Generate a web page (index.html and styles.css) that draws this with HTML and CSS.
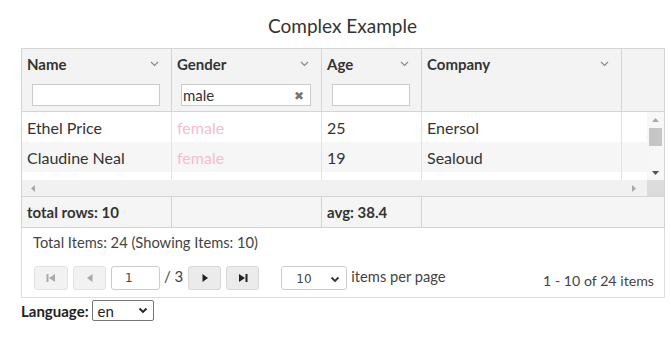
FILE: index.html
```html
<!DOCTYPE html>
<html lang="en">
<head>
  <meta charset="UTF-8">
  <title>Complex Example</title>
  <link rel="stylesheet" href="styles.css">
</head>
<body>
  <h2 class="title">Complex Example</h2>

  <div class="grid">
    <!-- header -->
    <div class="grid-head">
      <div class="hcell w150">
        <div class="hrow"><span>Name</span><svg class="chev" width="9" height="6" viewBox="0 0 9 6"><polyline points="1,1 4.5,4.5 8,1" fill="none" stroke="#888" stroke-width="1.1"/></svg></div>
        <input class="filter" type="text">
      </div>
      <div class="hcell w150">
        <div class="hrow"><span>Gender</span><svg class="chev" width="9" height="6" viewBox="0 0 9 6"><polyline points="1,1 4.5,4.5 8,1" fill="none" stroke="#888" stroke-width="1.1"/></svg></div>
        <div class="filter filled"><span>male</span><span class="clear">&#x2716;</span></div>
      </div>
      <div class="hcell w100">
        <div class="hrow"><span>Age</span><svg class="chev" width="9" height="6" viewBox="0 0 9 6"><polyline points="1,1 4.5,4.5 8,1" fill="none" stroke="#888" stroke-width="1.1"/></svg></div>
        <input class="filter" type="text">
      </div>
      <div class="hcell w200">
        <div class="hrow"><span>Company</span><svg class="chev" width="9" height="6" viewBox="0 0 9 6"><polyline points="1,1 4.5,4.5 8,1" fill="none" stroke="#888" stroke-width="1.1"/></svg></div>
      </div>
      <div class="hcell filler"></div>
    </div>

    <!-- body -->
    <div class="grid-body">
      <div class="viewport">
        <div class="row">
          <div class="cell w150">Ethel Price</div>
          <div class="cell w150 gender">female</div>
          <div class="cell w100">25</div>
          <div class="cell w200">Enersol</div>
        </div>
        <div class="row alt">
          <div class="cell w150">Claudine Neal</div>
          <div class="cell w150 gender">female</div>
          <div class="cell w100">19</div>
          <div class="cell w200">Sealoud</div>
        </div>
        <div class="row">
          <div class="cell w150"></div>
          <div class="cell w150"></div>
          <div class="cell w100"></div>
          <div class="cell w200"></div>
        </div>
      </div>
      <div class="vscroll">
        <svg width="17" height="14" viewBox="0 0 17 14"><polygon points="5,10 12,10 8.5,6" fill="#a8a8a8"/></svg>
        <div class="thumb"></div>
        <div class="vspace"></div>
        <svg width="17" height="14" viewBox="0 0 17 14"><polygon points="5,5 12,5 8.5,9" fill="#505050"/></svg>
      </div>
    </div>
    <div class="hscroll">
      <div class="htrack">
        <svg width="14" height="17" viewBox="0 0 14 17"><polygon points="9,5 9,12 5,8.5" fill="#a8a8a8"/></svg>
        <svg width="14" height="17" viewBox="0 0 14 17"><polygon points="5,5 5,12 9,8.5" fill="#a8a8a8"/></svg>
      </div>
      <div class="corner"></div>
    </div>

    <!-- footer -->
    <div class="grid-foot">
      <div class="fcell w150">total rows: 10</div>
      <div class="fcell w150"></div>
      <div class="fcell w100">avg: 38.4</div>
      <div class="fcell w200"></div>
    </div>
  </div>

  <!-- pager -->
  <div class="pager">
    <div class="summary">Total Items: 24 (Showing Items: 10)</div>
    <div class="pager-bar">
      <div class="nav">
        <button class="pbtn off"><svg width="12" height="12" viewBox="0 0 12 12"><rect x="1.5" y="2" width="2" height="8" fill="#aaa"/><polygon points="10,2 10,10 4,6" fill="#aaa"/></svg></button>
        <button class="pbtn off"><svg width="12" height="12" viewBox="0 0 12 12"><polygon points="8.5,2 8.5,10 3,6" fill="#aaa"/></svg></button>
        <div class="page-input">1</div>
        <span class="of">/ 3</span>
        <button class="pbtn"><svg width="12" height="12" viewBox="0 0 12 12"><polygon points="3.5,2 3.5,10 9,6" fill="#222"/></svg></button>
        <button class="pbtn"><svg width="12" height="12" viewBox="0 0 12 12"><polygon points="2,2 2,10 8,6" fill="#222"/><rect x="8.5" y="2" width="2" height="8" fill="#222"/></svg></button>
      </div>
      <div class="size">
        <div class="size-select"><span>10</span><svg width="10" height="7" viewBox="0 0 10 7"><polyline points="1.5,1.5 5,5 8.5,1.5" fill="none" stroke="#333" stroke-width="1.8"/></svg></div>
        <span class="per">items per page</span>
      </div>
      <div class="range">1 - 10 of 24 items</div>
    </div>
  </div>

  <div class="lang">
    <label>Language:</label>
    <div class="lang-select"><span>en</span><svg width="10" height="7" viewBox="0 0 10 7"><polyline points="1.5,1.5 5,5 8.5,1.5" fill="none" stroke="#222" stroke-width="1.8"/></svg></div>
  </div>
</body>
</html>
```

FILE: styles.css
```css
/* BASE */
* {
  margin: 0;
  padding: 0;
  box-sizing: border-box;
}

body {
  font-family: Lato, "Open Sans", sans-serif;
  font-size: 15px;
  color: #333;
  background: #fff;
  padding: 0 6px 0 21px;
}

.title {
  font-size: 19px;
  font-weight: normal;
  line-height: 24px;
  padding-top: 14px;
  height: 48px;
  text-align: center;
  color: #333;
  padding-right: 1px;
}

/* GRID */
.grid {
  width: 644px;
  border: 1px solid #d4d4d4;
}

.w150 { width: 150px; }
.w100 { width: 100px; }
.w200 { width: 200px; }

.grid-head {
  display: flex;
  height: 63px;
  background: #f3f3f3;
  border-bottom: 1px solid #d4d4d4;
}

.hcell {
  border-right: 1px solid #d4d4d4;
  padding-top: 6px;
}

.hcell.filler {
  flex: 1;
  border-right: none;
}

.hrow {
  display: flex;
  align-items: center;
  justify-content: space-between;
  height: 18px;
  padding: 0 12px 0 5px;
  font-weight: bold;
}

.filter {
  display: block;
  width: calc(100% - 21px);
  height: 22px;
  margin: 11px 0 0 10px;
  border: 1px solid #ccc;
  background: #fff;
  font-family: inherit;
  font-size: 15px;
}

.filter.filled {
  display: flex;
  align-items: center;
  justify-content: space-between;
  padding: 0 6px 0 1px;
  margin-left: 9px;
  width: calc(100% - 19px);
}

.clear {
  font-size: 12px;
  color: #777;
}

.grid-body {
  display: flex;
  height: 68px;
}

.viewport {
  width: 625px;
  overflow: hidden;
}

.row {
  display: flex;
  height: 30px;
  background: #fff;
}

.row.alt {
  background: #f6f6f6;
}

.cell {
  height: 30px;
  line-height: 31px;
  padding: 0 5px;
  font-size: 16px;
  border-right: 1px solid #e2e2e2;
  white-space: nowrap;
}

.cell.gender {
  color: #f8bccb;
}

.vscroll {
  width: 17px;
  background: #f7f7f7;
  display: flex;
  flex-direction: column;
  align-items: center;
}

.vscroll svg {
  display: block;
}

.thumb {
  width: 13px;
  height: 18px;
  background: #c6c6c6;
  margin-top: 2px;
}

.vspace {
  flex: 1;
}

.hscroll {
  display: flex;
  height: 17px;
  border-bottom: 1px solid #d4d4d4;
}

.htrack {
  flex: 1;
  background: #f1f1f1;
  display: flex;
  justify-content: space-between;
  padding: 0 6px 0 4px;
}

.corner {
  width: 17px;
  background: #dcdcdc;
}

.grid-foot {
  display: flex;
  height: 30px;
  background: #f5f5f5;
}

.fcell {
  line-height: 30px;
  padding: 0 5px;
  font-weight: bold;
  border-right: 1px solid #d4d4d4;
}

.fcell:last-child {
  border-right: none;
}

/* PAGER */
.pager {
  width: 644px;
  height: 70px;
  border: 1px solid #ddd;
  border-top: none;
  padding: 5px 10px 0 11px;
  font-size: 14.7px;
  color: #444;
}

.summary {
  line-height: 18px;
}

.pager-bar {
  display: flex;
  align-items: center;
  margin-top: 15px;
  height: 24px;
}

.nav {
  display: flex;
  align-items: center;
}

.pbtn {
  width: 33px;
  height: 24px;
  border: 1px solid #d8d8d8;
  border-radius: 3px;
  background: #ebebeb;
  display: flex;
  align-items: center;
  justify-content: center;
  margin-left: 5px;
}

.pbtn:first-child {
  margin-left: 1px;
  width: 34px;
}

.pbtn.off {
  background: #f2f2f2;
  border-color: #e2e2e2;
}

.page-input {
  width: 49px;
  height: 24px;
  border: 1px solid #ccc;
  border-radius: 3px;
  margin-left: 5px;
  padding-left: 13px;
  line-height: 22px;
  font-size: 12px;
  font-family: "DejaVu Sans", sans-serif;
  color: #444;
}

.of {
  font-size: 15px;
  margin: -5px 0 0 4px;
  color: #444;
}

.size {
  display: flex;
  align-items: center;
  margin-left: 22px;
}

.size-select {
  width: 66px;
  height: 24px;
  border: 1px solid #ccc;
  border-radius: 3px;
  display: flex;
  align-items: center;
  justify-content: space-between;
  padding: 2px 6px 0 14px;
  font-size: 12px;
  font-family: "DejaVu Sans", sans-serif;
}

.per {
  font-size: 14.7px;
  margin: -5px 0 0 4px;
}

.range {
  margin-left: auto;
  font-size: 14.2px;
  margin-top: 4px;
}

/* LANGUAGE */
.lang {
  display: flex;
  align-items: center;
  margin-top: 2px;
}

.lang label {
  font-weight: bold;
  font-size: 15px;
  color: #222;
}

.lang-select {
  width: 62px;
  height: 21px;
  border: 1px solid #767676;
  border-radius: 2px;
  margin-left: 3px;
  display: flex;
  align-items: center;
  justify-content: space-between;
  padding: 0 5px;
  font-size: 15px;
  color: #222;
}
```
